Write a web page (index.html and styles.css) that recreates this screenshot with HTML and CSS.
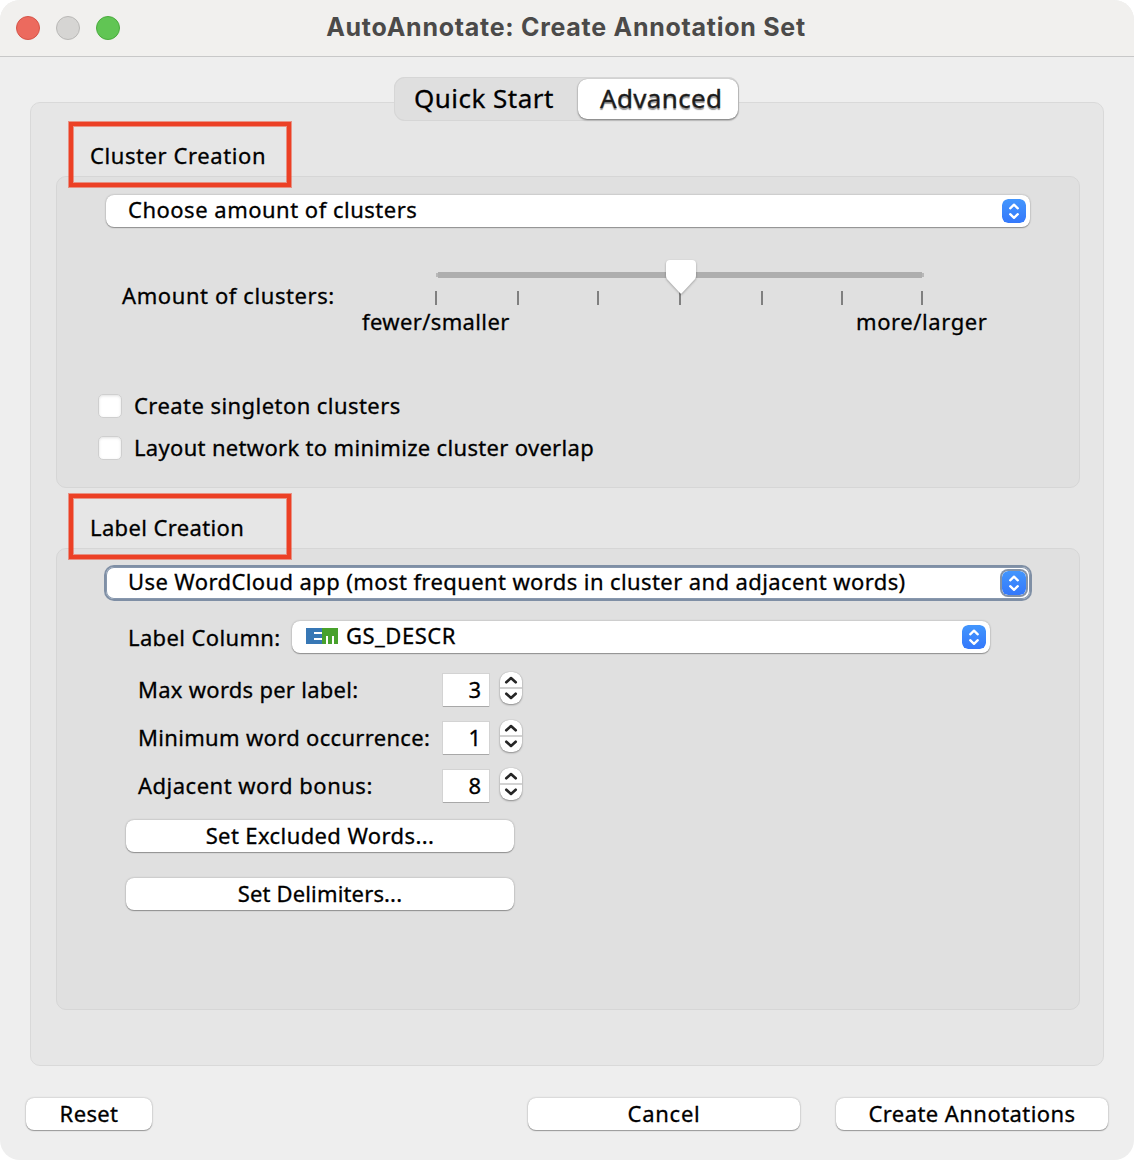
FILE: index.html
```
<!DOCTYPE html>
<html lang="en">
<head>
<meta charset="utf-8">
<title>AutoAnnotate: Create Annotation Set</title>
<link rel="stylesheet" href="styles.css">
</head>
<body>
<svg class="defs" width="0" height="0" aria-hidden="true">
  <defs>
    <linearGradient id="blue" x1="0" y1="0" x2="0" y2="1">
      <stop offset="0" stop-color="#4396fd"/>
      <stop offset="1" stop-color="#3478fb"/>
    </linearGradient>
    <symbol id="popup" viewBox="0 0 24 24">
      <rect width="24" height="24" rx="6" fill="url(#blue)"/>
      <path d="M8.2 9.3 12 5.7l3.8 3.6M8.2 15.2 12 18.8l3.8-3.6" fill="none" stroke="#fff" stroke-width="2.3" stroke-linecap="round" stroke-linejoin="round"/>
    </symbol>
    <symbol id="stepper" viewBox="0 0 22 32">
      <path d="M0 16h22" stroke="#d2d2d2" stroke-width="2"/>
      <path d="M6.3 10.2 11 6.1l4.7 4.1M6.3 21.8 11 25.9l4.7-4.1" fill="none" stroke="#262626" stroke-width="2.7" stroke-linecap="round" stroke-linejoin="round"/>
    </symbol>
  </defs>
</svg>
<div class="window">
  <header class="titlebar">
    <div class="lights">
      <span class="light light-close"></span>
      <span class="light light-min"></span>
      <span class="light light-zoom"></span>
    </div>
    <h1 class="title">AutoAnnotate: Create Annotation Set</h1>
  </header>

  <main class="content">
    <nav class="tabs">
      <span class="tab">Quick Start</span>
      <span class="tab tab-active">Advanced</span>
    </nav>

    <div class="panel">
      <h2 class="heading ls-6">Cluster Creation</h2>
      <section class="group group-cluster">
        <div class="combo"><span class="combo-text ls-5">Choose amount of clusters</span><svg class="popup"><use href="#popup"/></svg></div>
        <div class="slider-row">
          <span class="slider-label ls-6">Amount of clusters:</span>
          <div class="slider">
            <svg class="slider-art" width="626" height="50" viewBox="0 0 626 50">
              <rect x="74" y="17" width="488" height="4" fill="#b8b8b8"/>
              <rect x="76" y="16" width="484" height="6" fill="#aeaeae"/>
              <path d="M74 35v14M156 35v14M236 35v14M318 35v14M400 35v14M480 35v14M560 35v14" stroke="#808080" stroke-width="2"/>
              <path class="thumb" d="M308 4h22q4 0 4 4v12q0 2-1.4 3.6L319.800 37.300q-.8.8-1.600 0L305.400 23.600Q304 22 304 20V8q0-4 4-4z" fill="#fff"/>
            </svg>
            <div class="slider-ends">
              <span class="ls-37">fewer/smaller</span>
              <span class="ls-6">more/larger</span>
            </div>
          </div>
        </div>
        <div class="checks">
          <label class="check"><span class="box"></span><span class="ls-43">Create singleton clusters</span></label>
          <label class="check"><span class="box"></span><span class="ls-32">Layout network to minimize cluster overlap</span></label>
        </div>
      </section>

      <h2 class="heading heading-label ls-37">Label Creation</h2>
      <section class="group group-label">
        <div class="combo combo-focus"><span class="combo-text ls-4">Use WordCloud app (most frequent words in cluster and adjacent words)</span><svg class="popup"><use href="#popup"/></svg></div>
        <div class="column-row">
          <span class="column-label ls-37">Label Column:</span>
          <div class="combo combo-column">
            <svg class="em" width="32" height="16" viewBox="0 0 32 16">
              <path d="M0 0h16v4H8v2h8v4H8v2h8v4H0z" fill="#3777b5"/>
              <path d="M16 0h16v16h-4V8h-2v8h-4V8h-2v8h-4z" fill="#48a12c"/>
            </svg>
            <span class="combo-text ls-5">GS_DESCR</span><svg class="popup"><use href="#popup"/></svg>
          </div>
        </div>
        <div class="spinners">
          <div class="spin-row"><span class="spin-label ls-27">Max words per label:</span><span class="field">3</span><svg class="stepper"><use href="#stepper"/></svg></div>
          <div class="spin-row"><span class="spin-label ls-32">Minimum word occurrence:</span><span class="field">1</span><svg class="stepper"><use href="#stepper"/></svg></div>
          <div class="spin-row"><span class="spin-label ls-5">Adjacent word bonus:</span><span class="field">8</span><svg class="stepper"><use href="#stepper"/></svg></div>
        </div>
        <div class="set-buttons">
          <button class="button ls-4">Set Excluded Words...</button>
          <button class="button ls-15">Set Delimiters...</button>
        </div>
      </section>
    </div>
  </main>

  <footer class="footer">
    <button class="button reset ls-37">Reset</button>
    <button class="button wide ls-7">Cancel</button>
    <button class="button wide ls-43">Create Annotations</button>
  </footer>
</div>
</body>
</html>
```
FILE: styles.css
```
* { box-sizing: border-box; }

body {
  margin: 0;
  background: #fff;
  color: #000;
  font: 22px/30px "Noto Sans", "Open Sans", sans-serif;
  -webkit-text-stroke: 0.3px currentColor;
  white-space: nowrap;
}

.defs { display: block; }

.window {
  display: flex;
  flex-direction: column;
  width: 1134px;
  height: 1160px;
  background: #eee;
  border-radius: 20px;
  overflow: hidden;
}

/* Title bar */
.titlebar {
  display: grid;
  grid-template-columns: 104px 1fr 104px;
  align-items: center;
  height: 57px;
  padding: 0 17px 0 16px;
  background: #f1f0ee;
  border-bottom: 1px solid #c8c8c8;
}
.lights { display: flex; gap: 16px; }
.light {
  width: 24px;
  height: 24px;
  border-radius: 50%;
  border: 1px solid;
}
.light-close { background: #ec6a5e; border-color: #d55448; }
.light-min { background: #d6d5d3; border-color: #b9b8b6; }
.light-zoom { background: #61c554; border-color: #4aab3d; }
.title {
  margin: 0 1px 0 0;
  padding-bottom: 2px;
  text-align: center;
  font: 700 25px/30px Inter, sans-serif;
  letter-spacing: 0.73px;
  color: #4b4a49;
  -webkit-text-stroke: 0;
}

/* Tabs */
.content { padding: 20px 30px 0; }
.tabs {
  position: relative;
  z-index: 1;
  display: flex;
  width: 345px;
  height: 44px;
  margin: 0 0 -19px 364px;
  padding: 2px 1px 2px 0;
  background: #dfdfdf;
  border-radius: 11px;
  box-shadow: inset 0 0 0 1px #d6d6d6;
  font-size: 26px;
  line-height: 36px;
}
.tab {
  flex: none;
  width: 184px;
  padding: 1px 0 0 20px;
  letter-spacing: 0.48px;
}
.tab-active {
  width: 160px;
  padding-left: 22px;
  background: #fff;
  border-radius: 9px;
  box-shadow: 0 1px 2px rgba(0, 0, 0, 0.45), 0 0 1px rgba(0, 0, 0, 0.3);
  color: #1c1c1c;
  letter-spacing: 0.34px;
  text-shadow: 0 2px 1px rgba(0, 0, 0, 0.4);
}

/* Panels */
.panel {
  height: 964px;
  padding: 19px 23px 0 25px;
  background: #e6e6e6;
  border: 1px solid #d9d9d9;
  border-radius: 10px;
}
.heading {
  position: relative;
  z-index: 1;
  width: 222px;
  height: 65px;
  margin: 0 0 -11px 13px;
  padding: 14px 0 0 17px;
  border: 4px solid #ec4025;
  box-shadow: 0 0 0 1px rgba(236, 64, 37, 0.5), inset 0 0 0 1px rgba(236, 64, 37, 0.5);
  font-size: 22px;
  font-weight: 400;
}
.heading-label { margin-top: 6px; }
.group {
  padding: 18px 49px 0;
  background: #e0e0e0;
  border: 1px solid #d6d6d6;
  border-radius: 10px;
}
.group-cluster { height: 312px; }
.group-label { height: 462px; }

/* Pop-up menus and buttons */
.combo {
  display: flex;
  align-items: center;
  width: 924px;
  height: 32px;
  padding: 0 4px 0 22px;
  background: #fff;
  border-radius: 8px;
  box-shadow: 0 1px 1px rgba(0, 0, 0, 0.3), 0 0 2px rgba(0, 0, 0, 0.3);
}
.combo-text { flex: 1; margin-bottom: 4px; }
.popup { flex: none; width: 24px; height: 24px; border-radius: 6px; }
.combo-focus {
  box-shadow: inset 0 0 0 1px #8797ad, 0 0 0 2px #7f8fa5;
}
.combo-focus .popup { box-shadow: 0 0 0 2px #8493a9; }
.combo-column { width: 698px; padding-left: 14px; }
.em { flex: none; margin: 0 8px 2px 0; }
.button {
  display: flex;
  align-items: center;
  justify-content: center;
  height: 32px;
  padding: 0 0 2px;
  border: 0;
  border-radius: 8px;
  background: #fff;
  box-shadow: 0 1px 1px rgba(0, 0, 0, 0.3), 0 0 2px rgba(0, 0, 0, 0.3);
  color: #000;
  font-family: inherit;
  font-size: 22px;
  line-height: 30px;
}

/* Slider */
.slider-row { display: flex; margin: 29px 0 0 16px; }
.slider-label { width: 240px; padding-top: 24px; }
.slider-art { display: block; }
.thumb { filter: drop-shadow(0 1px 1px rgba(0, 0, 0, 0.3)); }
.slider-ends { display: grid; grid-template-columns: 494px auto; }

/* Checkboxes */
.checks {
  display: flex;
  flex-direction: column;
  gap: 12px;
  margin: 54px 0 0 -8px;
}
.check { display: flex; gap: 12px; }
.box {
  width: 24px;
  height: 24px;
  margin-top: 4px;
  background: #fff;
  border: 1px solid #cfcfcf;
  border-radius: 5px;
  box-shadow: inset 0 1px 3px rgba(0, 0, 0, 0.12);
}

/* Label options */
.column-row { display: flex; margin: 22px 0 0 22px; }
.column-label { width: 164px; padding-top: 1px; }
.spinners {
  display: flex;
  flex-direction: column;
  gap: 14px;
  margin: 19px 0 0 32px;
}
.spin-row { display: flex; height: 34px; }
.spin-label { width: 305px; padding-top: 2px; }
.field {
  width: 46px;
  height: 32px;
  margin: 2px 11px 0 0;
  padding-right: 8px;
  background: #fff;
  box-shadow: 0 1px 0 #a8a8a8, 0 0 0 1px #d3d3d3;
  text-align: right;
}
.stepper {
  width: 22px;
  height: 32px;
  border-radius: 9px;
  background: #fff;
  box-shadow: 0 1px 2px rgba(0, 0, 0, 0.35), 0 0 1px rgba(0, 0, 0, 0.3);
}
.set-buttons {
  display: flex;
  flex-direction: column;
  gap: 26px;
  width: 388px;
  margin: 18px 0 0 20px;
}

/* Footer */
.footer {
  display: flex;
  gap: 36px;
  padding: 32px 26px 0;
}
.reset { width: 126px; margin-right: auto; }
.wide { width: 272px; }

/* Tracking */
.ls-15 { letter-spacing: 0.15px; }
.ls-27 { letter-spacing: 0.27px; }
.ls-32 { letter-spacing: 0.32px; }
.ls-37 { letter-spacing: 0.37px; }
.ls-4 { letter-spacing: 0.4px; }
.ls-43 { letter-spacing: 0.44px; }
.ls-5 { letter-spacing: 0.5px; }
.ls-6 { letter-spacing: 0.59px; }
.ls-7 { letter-spacing: 0.73px; }
```
